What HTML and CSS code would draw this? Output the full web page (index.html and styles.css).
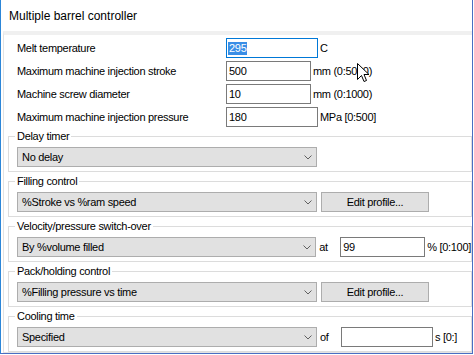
FILE: index.html
```html
<!DOCTYPE html>
<html lang="en">
  <head>
    <meta charset="UTF-8" />
    <title>Multiple barrel controller</title>
    <link rel="stylesheet" href="styles.css">
  </head>
  <body>
    <div class="window">
      <div class="titlebar">Multiple barrel controller</div>

      <div class="client">
        <div class="panel">
          <div class="fields">
            <div class="field">
              <span class="field-label">Melt temperature</span>
              <div class="textbox wide focused"><span class="sel">295</span></div>
              <span class="unit">C</span>
            </div>
            <div class="field">
              <span class="field-label">Maximum machine injection stroke</span>
              <input class="textbox" type="text" value="500" />
              <span class="unit">mm (0:5000)</span>
            </div>
            <div class="field">
              <span class="field-label">Machine screw diameter</span>
              <input class="textbox" type="text" value="10" />
              <span class="unit">mm (0:1000)</span>
            </div>
            <div class="field">
              <span class="field-label">Maximum machine injection pressure</span>
              <input class="textbox wide" type="text" value="180" />
              <span class="unit">MPa [0:500]</span>
            </div>
          </div>

          <fieldset class="group">
            <legend>Delay timer</legend>
            <div class="group-row">
              <div class="combo">
                <span>No delay</span>
                <svg width="8" height="5" viewBox="0 0 8 5"><path d="M0.5 0.5 L4 4 L7.5 0.5" /></svg>
              </div>
            </div>
          </fieldset>

          <fieldset class="group">
            <legend>Filling control</legend>
            <div class="group-row">
              <div class="combo">
                <span>%Stroke vs %ram speed</span>
                <svg width="8" height="5" viewBox="0 0 8 5"><path d="M0.5 0.5 L4 4 L7.5 0.5" /></svg>
              </div>
              <button class="button" type="button">Edit profile...</button>
            </div>
          </fieldset>

          <fieldset class="group">
            <legend>Velocity/pressure switch-over</legend>
            <div class="group-row">
              <div class="combo">
                <span>By %volume filled</span>
                <svg width="8" height="5" viewBox="0 0 8 5"><path d="M0.5 0.5 L4 4 L7.5 0.5" /></svg>
              </div>
              <span class="inline-label">at</span>
              <input class="textbox" type="text" value="99" />
              <span class="unit">% [0:100]</span>
            </div>
          </fieldset>

          <fieldset class="group">
            <legend>Pack/holding control</legend>
            <div class="group-row">
              <div class="combo">
                <span>%Filling pressure vs time</span>
                <svg width="8" height="5" viewBox="0 0 8 5"><path d="M0.5 0.5 L4 4 L7.5 0.5" /></svg>
              </div>
              <button class="button" type="button">Edit profile...</button>
            </div>
          </fieldset>

          <fieldset class="group">
            <legend>Cooling time</legend>
            <div class="group-row">
              <div class="combo">
                <span>Specified</span>
                <svg width="8" height="5" viewBox="0 0 8 5"><path d="M0.5 0.5 L4 4 L7.5 0.5" /></svg>
              </div>
              <span class="inline-label">of</span>
              <input class="textbox wide" type="text" value="" />
              <span class="unit">s [0:]</span>
            </div>
          </fieldset>
        </div>
      </div>

      <!-- mouse pointer over the stroke range -->
      <svg class="cursor" width="13" height="20" viewBox="0 0 13 20">
        <path d="M0.5 0.5 L0.5 16.5 L4.5 12.5 L7 18.5 L9.5 17.5 L7 11.5 L12 11.5 Z" />
      </svg>
    </div>
  </body>
</html>
```

FILE: styles.css
```css
* {
  box-sizing: border-box;
}

body {
  margin: 0;
  background-color: #fff;
  color: #000;
  font-family: "Liberation Sans", Arial, sans-serif;
  font-size: 11px;
  letter-spacing: -0.3px;
}

.window {
  position: relative;
  width: 473px;
  height: 354px;
  display: flex;
  flex-direction: column;
  border: 1px solid #4a6ec2;
  border-top: none;
  border-left-color: #2c86d8;
}

.titlebar {
  flex-shrink: 0;
  height: 31px;
  display: flex;
  align-items: center;
  padding-left: 8px;
  font-size: 12px;
  letter-spacing: 0;
}

.client {
  flex: 1;
  padding: 0 0 3px 2px;
}

.panel {
  height: 100%;
  overflow: hidden;
  border-top: 4px solid #f0f0f0;
  border-left: 1px solid #e3e3e3;
  border-bottom: 1px solid #e3e3e3;
}

/* top block of numeric fields */
.fields {
  display: flex;
  flex-direction: column;
  gap: 3px;
  padding: 3px 0 0 13px;
}

.field,
.group-row {
  display: flex;
  align-items: center;
  height: 20px;
}

.field-label {
  width: 209px;
}

.textbox {
  width: 85px;
  height: 20px;
  margin: 0;
  padding: 0 2px;
  border: 1px solid #7a7a7a;
  background-color: #fff;
  color: #000;
  font: inherit;
  letter-spacing: inherit;
  outline: none;
}

.textbox.wide {
  width: 92px;
}

.textbox.focused {
  display: flex;
  align-items: center;
  padding-left: 1px;
  border-color: #0078d7;
}

.sel {
  background-color: #3a8ee6;
  color: #fff;
  padding: 0 1px;
  line-height: 13px;
}

.unit {
  margin-left: 2px;
  white-space: nowrap;
}

/* group boxes */
.group {
  margin: 2px 0 0 4px;
  padding: 4px 0 4px 8px;
  border: 1px solid #dcdcdc;
  min-width: 0;
}

.group legend {
  margin-left: -2px;
  padding: 0 2px;
  line-height: 14px;
}

.combo {
  width: 300px;
  height: 20px;
  display: flex;
  align-items: center;
  padding-left: 4px;
  border: 1px solid #adadad;
  background-color: #e1e1e1;
}

.combo svg {
  margin-left: auto;
  margin-right: 4px;
}

.combo path {
  fill: none;
  stroke: #606060;
}

.button {
  width: 108px;
  height: 20px;
  margin-left: 4px;
  padding: 0;
  border: 1px solid #adadad;
  background-color: #e1e1e1;
  color: #000;
  font: inherit;
  letter-spacing: inherit;
}

.inline-label {
  width: 21px;
  margin-left: 3px;
}

.cursor {
  position: absolute;
  left: 356px;
  top: 63px;
}

.cursor path {
  fill: #fff;
  stroke: #000;
}
```
